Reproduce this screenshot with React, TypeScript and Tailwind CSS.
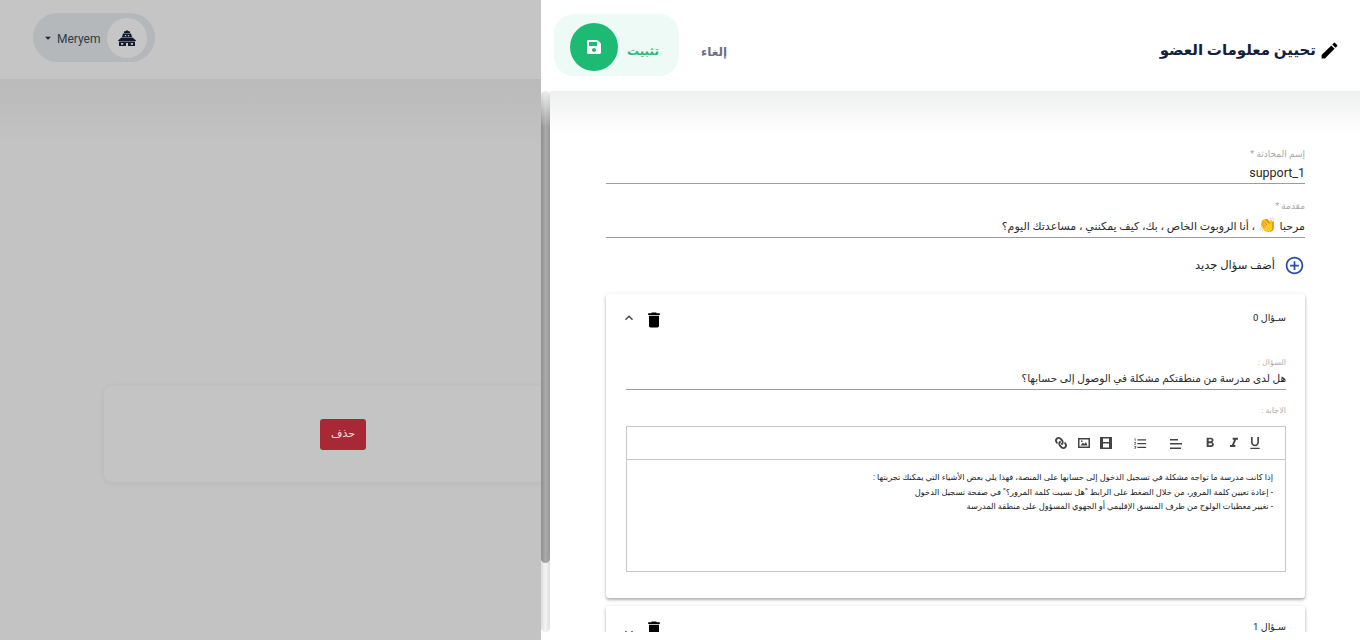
import {FaLink, FaSave} from "react-icons/fa";
import {
    MdAddCircleOutline,
    MdArrowDropDown,
    MdDelete,
    MdEdit,
    MdExpandLess,
    MdFormatBold,
    MdFormatItalic,
    MdFormatListNumbered,
    MdFormatUnderlined,
} from "react-icons/md";

const answerLines = [
    "إذا كانت مدرسة ما تواجه مشكلة في تسجيل الدخول إلى حسابها على المنصة، فهذا يلي بعض الأشياء التي يمكنك تجربتها :",
    "- إعادة تعيين كلمة المرور، من خلال الضغط على الرابط \"هل نسيت كلمة المرور؟\" في صفحة تسجيل الدخول",
    "- تغيير معطيات الولوج من طرف المنسق الإقليمي أو الجهوي المسؤول على منطقة المدرسة",
];

function SchoolIcon() {
    return (
        <svg viewBox="0 0 18 16" className="h-[16px] w-[18px] text-[#12182b]" fill="currentColor">
            <path d="M9 0l1 1 2 .6V3H6V1.600l2-.6z"/>
            <path fillRule="evenodd" d="M5 3.500h8L14 7H4zM6.800 5v1.200h1.400V5zm3 0v1.200h1.400V5z"/>
            <path d="M3.500 7.500h11L18 10.500v.5H0v-.5z"/>
            <path fillRule="evenodd" d="M1 11.500h16V16H1zM3 13v1.700h2.200V13zm5 0v3h2v-3zm4.800 0v1.700H15V13z"/>
        </svg>
    );
}

function ImageIcon() {
    return (
        <svg viewBox="0 0 12 12" className="h-[12px] w-[12px]" fill="currentColor">
            <path fillRule="evenodd" d="M0 1h12v10H0zm1.500 1.500v7h9v-7z"/>
            <path d="M2.500 8.500L5 5.500l1.500 1.500L8 5l1.500 3.500z"/>
            <rect x="3" y="3.500" width="1.500" height="1.500"/>
        </svg>
    );
}

function FilmIcon() {
    return (
        <svg viewBox="0 0 12 12" className="h-[12px] w-[12px]" fill="currentColor">
            <path fillRule="evenodd" d="M0 0h12v12H0zm3 1.500v3.500h6V1.500zm0 5V10.500h6V6.500z"/>
        </svg>
    );
}

function AlignIcon() {
    return (
        <svg viewBox="0 0 12 10" className="h-[10px] w-[12px]" fill="currentColor">
            <rect x="0" y="0" width="8" height="1.500"/>
            <rect x="0" y="4" width="12" height="1.500"/>
            <rect x="0" y="8.500" width="11" height="1.500"/>
        </svg>
    );
}

function Toolbar() {
    return (
        <div dir="ltr" className="flex h-[33px] items-center justify-end border-b border-[#c8c8c8] pr-[22px] text-[#444]">
            <FaLink className="h-[12px] w-[12px] -scale-x-100"/>
            <span className="ml-[11px]"><ImageIcon/></span>
            <span className="ml-[10px]"><FilmIcon/></span>
            <MdFormatListNumbered className="ml-[21px] h-[15px] w-[15px]"/>
            <span className="ml-[22px] mt-[2px]"><AlignIcon/></span>
            <MdFormatBold className="ml-[20px] h-[16px] w-[16px]"/>
            <MdFormatItalic className="ml-[8px] h-[16px] w-[16px]"/>
            <MdFormatUnderlined className="ml-[5px] h-[16px] w-[16px]"/>
        </div>
    );
}

function QuestionHeader({title, open}: { title: string; open: boolean }) {
    return (
        <div className="flex h-[20px] items-center justify-between">
            <span className="text-[9.500px] text-[#222]">{title}</span>
            <span className="-ml-[5px] flex items-center gap-[7px]">
                <MdDelete className="mt-[3px] h-[20px] w-[20px] text-black"/>
                <MdExpandLess className={`h-[16px] w-[16px] text-[#444] ${open ? "" : "mt-[12px] rotate-180"}`}/>
            </span>
        </div>
    );
}

export default function App() {
    return (
        <div className="flex h-[640px] w-[1360px] overflow-hidden bg-white font-['Roboto','DejaVu_Sans',sans-serif]">
            <aside className="h-full w-[541px] shrink-0 overflow-hidden bg-[#c3c3c3]">
                <header className="flex h-[79px] items-start bg-[#c5c5c5] pl-[33px] pt-[13px]">
                    <div className="flex h-[49px] w-[122px] items-center rounded-full bg-[#b4b8bb] pl-[8px] pr-[8px]">
                        <MdArrowDropDown className="h-[14px] w-[14px] text-[#1c2433]"/>
                        <span className="ml-[2px] mt-[2px] text-[12px] text-[#2f3a44]">Meryem</span>
                        <span className="ml-auto flex h-[40px] w-[40px] items-center justify-center rounded-full bg-[#c6c6c6]">
                            <SchoolIcon/>
                        </span>
                    </div>
                </header>
                <div className="h-[561px] bg-gradient-to-b from-[#b9bab9] to-[#c3c3c3] to-[12%] pl-[104px] pt-[307px]">
                    <div className="flex h-[96px] w-[478px] items-center justify-center rounded-[8px] bg-[#c4c4c4] shadow-[0_1px_6px_rgba(0,0,0,0.06)]">
                        <button type="button" className="h-[31px] w-[46px] rounded-[3px] bg-[#a82835] text-[11px] text-[#e8e0e0]">حذف</button>
                    </div>
                </div>
            </aside>

            <main className="flex h-full min-w-0 flex-1 flex-col">
                <header className="flex h-[91px] shrink-0 items-start justify-between pl-[13px] pr-[20px] pt-[14px]">
                    <div className="flex items-start">
                        <div className="flex h-[62px] w-[125px] items-start rounded-[20px] bg-[#eefaf6] pl-[16px] pt-[9px]">
                            <span className="flex h-[48px] w-[48px] items-center justify-center rounded-full bg-[#1dba74]">
                                <FaSave className="h-[16px] w-[16px] text-white"/>
                            </span>
                            <span className="ml-[9px] mt-[18px] text-[12px] font-bold leading-[20px] text-[#28b878]">تثبيت</span>
                        </div>
                        <span className="ml-[22px] mt-[28px] text-[12px] font-bold leading-[20px] text-[#6b7085]">إلغاء</span>
                    </div>
                    <h1 dir="rtl" className="mt-[22px] flex items-center gap-[3px] text-[15px] font-bold leading-[28px] text-[#14203a]">
                        <MdEdit className="h-[21px] w-[21px] text-black"/>
                        تحيين معلومات العضو
                    </h1>
                </header>

                <div className="flex h-[541px] min-h-0">
                    <div className="relative h-full w-[9px] shrink-0 rounded-full bg-gradient-to-r from-[#dcdcdc] via-[#f4f4f4] to-[#dedede]">
                        <div className="h-[472px] rounded-full bg-gradient-to-r from-[#8e8e8e] via-[#aaaaaa] to-[#999999]"/>
                        <div className="absolute inset-x-0 top-0 h-[36px] bg-gradient-to-b from-white/80 to-transparent"/>
                    </div>
                    <div dir="rtl" className="h-full min-w-0 flex-1 overflow-hidden bg-gradient-to-b from-[#eef0ef] to-white to-[8%] pl-[56px] pr-[55px] pt-[56px]">
                        <div className="border-b border-[#9a9e9f]">
                            <p className="text-[9px] leading-[14px] text-[#a8a8a8]">إسم المحادثة *</p>
                            <p dir="ltr" className="mt-[2px] h-[20px] text-right text-[12.500px] leading-[20px] text-[#2a2a2a]">support_1</p>
                        </div>
                        <div className="mt-[15px] border-b border-[#9a9e9f]">
                            <p className="text-[9px] leading-[14px] text-[#a8a8a8]">مقدمة *</p>
                            <p className="mt-[4px] h-[20px] text-[11px] leading-[20px] text-[#2a2a2a]">
                                مرحبا <span className="text-[15px] leading-[16px]">👏</span> ، أنا الروبوت الخاص ، بك، كيف يمكنني ، مساعدتك اليوم؟
                            </p>
                        </div>

                        <div className="mt-[17px] flex items-center gap-[9px] text-[11.500px] text-[#222]">
                            <MdAddCircleOutline className="h-[21px] w-[21px] text-[#2a4fa8]"/>
                            أضف سؤال جديد
                        </div>

                        <section className="mt-[18px] h-[304px] rounded-[3px] pl-[20px] pr-[19px] pt-[14px] shadow-[0_2px_3px_rgba(0,0,0,0.28),0_0_5px_rgba(0,0,0,0.08)]">
                            <QuestionHeader title="سـؤال 0" open/>
                            <div className="mt-[29px] border-b border-[#9a9e9f]">
                                <p className="text-[8px] leading-[12px] text-[#b0b0b0]">السؤال :</p>
                                <p className="h-[20px] text-[10.500px] leading-[20px] text-[#2a2a2a]">هل لدى مدرسة من منطقتكم مشكلة في الوصول إلى حسابها؟</p>
                            </div>
                            <p className="mt-[14px] text-[8px] leading-[14px] text-[#b0b0b0]">الاجابة :</p>
                            <div className="mt-[8px] h-[146px] border border-[#c8c8c8]">
                                <Toolbar/>
                                <div className="pr-[12px] pt-[10px] text-[8.250px] leading-[14.500px] text-[#222]">
                                    {answerLines.map((line) => (
                                        <p key={line}>{line}</p>
                                    ))}
                                </div>
                            </div>
                        </section>

                        <section className="mt-[8px] h-[60px] rounded-[3px] pl-[20px] pr-[19px] pt-[11px] shadow-[0_2px_3px_rgba(0,0,0,0.28),0_0_5px_rgba(0,0,0,0.08)]">
                            <QuestionHeader title="سـؤال 1" open={false}/>
                        </section>
                    </div>
                </div>
            </main>
        </div>
    );
}
